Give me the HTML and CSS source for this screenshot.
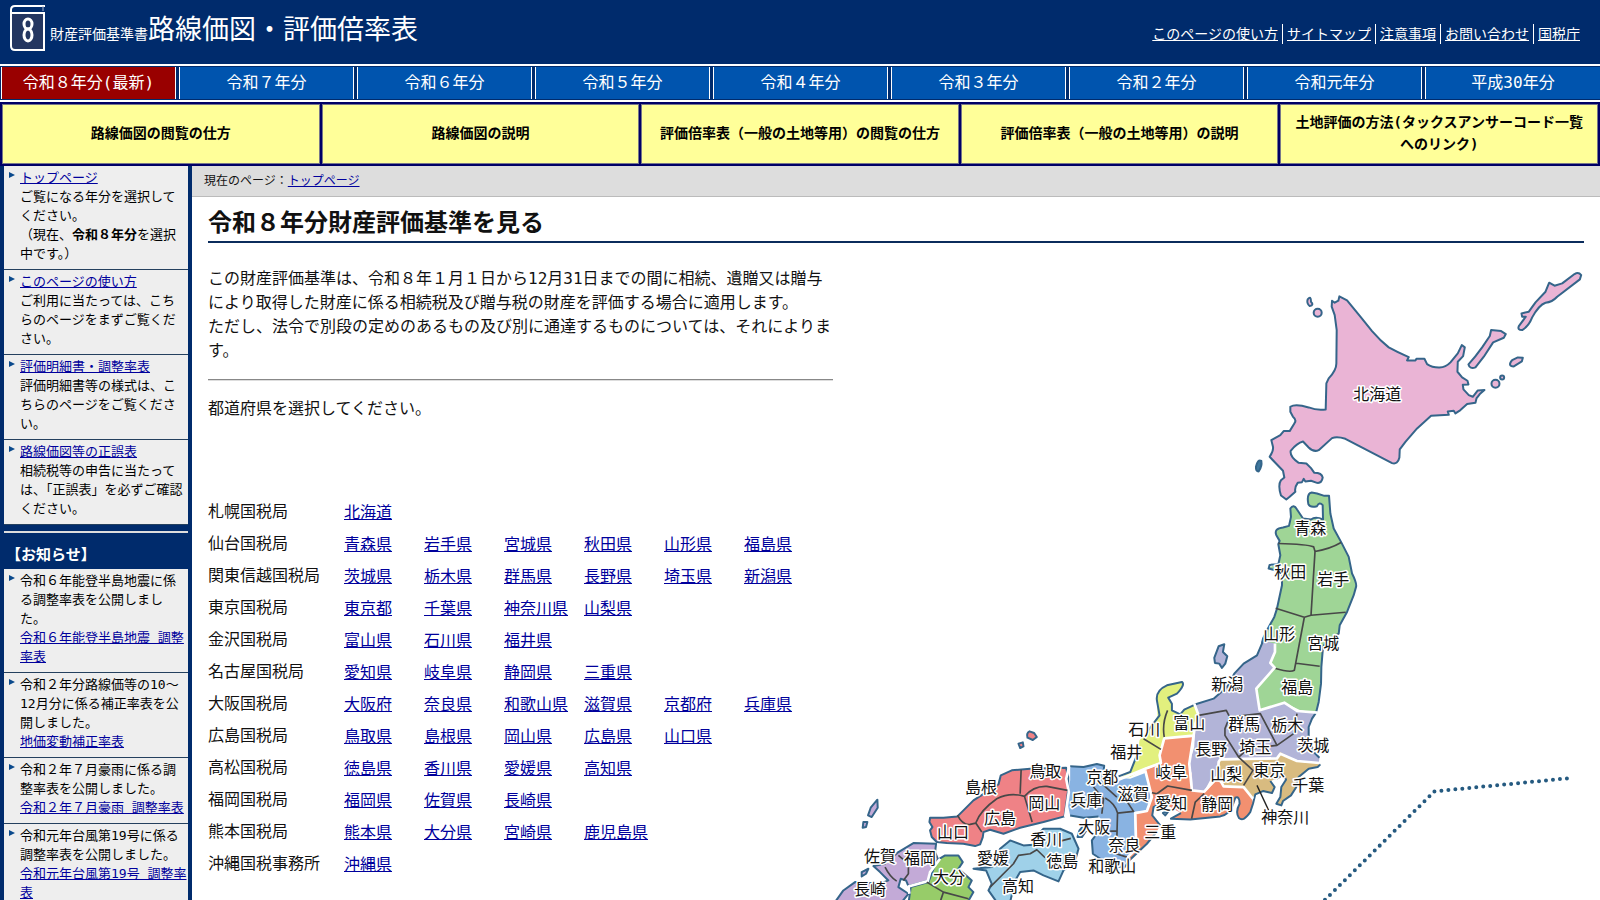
FILE: index.html
```html
<!DOCTYPE html>
<html lang="ja">
<head>
<meta charset="utf-8">
<title>財産評価基準書 路線価図・評価倍率表</title>
<link rel="stylesheet" href="styles.css">
</head>
<body>
<header class="site-header">
  <div class="brand">
    <svg class="book" viewBox="0 0 36 46" aria-hidden="true">
      <rect x="2" y="9" width="31" height="35" fill="#243660"/>
      <path d="M34 2V1H5Q1 1 1 5V41Q1 45 5 45H34V8H2" fill="none" stroke="#fff" stroke-width="2"/>
      <path d="M33 1V6" fill="none" stroke="#aab4cc" stroke-width="1"/>
      <ellipse cx="18" cy="19" rx="4" ry="5" fill="none" stroke="#fff" stroke-width="3"/>
      <ellipse cx="18" cy="30" rx="4" ry="6" fill="none" stroke="#fff" stroke-width="3"/>
    </svg>
    <span class="brand-small">財産評価基準書</span><span class="brand-large">路線価図・評価倍率表</span>
  </div>
  <nav class="utility">
    <a href="#">このページの使い方</a>
    <a href="#">サイトマップ</a>
    <a href="#">注意事項</a>
    <a href="#">お問い合わせ</a>
    <a href="#">国税庁</a>
  </nav>
</header>
<nav class="years">
  <a class="current" href="#">令和８年分(最新)</a>
  <a href="#">令和７年分</a>
  <a href="#">令和６年分</a>
  <a href="#">令和５年分</a>
  <a href="#">令和４年分</a>
  <a href="#">令和３年分</a>
  <a href="#">令和２年分</a>
  <a href="#">令和元年分</a>
  <a href="#">平成30年分</a>
</nav>
<nav class="guides">
  <a href="#">路線価図の閲覧の仕方</a>
  <a href="#">路線価図の説明</a>
  <a href="#">評価倍率表（一般の土地等用）の閲覧の仕方</a>
  <a href="#">評価倍率表（一般の土地等用）の説明</a>
  <a href="#">土地評価の方法(タックスアンサーコード一覧へのリンク)</a>
</nav>
<div class="page">
  <aside class="sidebar">
    <ul class="side-list">
      <li><a href="#">トップページ</a><br>ご覧になる年分を選択してください。<br>（現在、<strong>令和８年分</strong>を選択中です。）</li>
      <li><a href="#">このページの使い方</a><br>ご利用に当たっては、こちらのページをまずご覧ください。</li>
      <li><a href="#">評価明細書・調整率表</a><br>評価明細書等の様式は、こちらのページをご覧ください。</li>
      <li><a href="#">路線価図等の正誤表</a><br>相続税等の申告に当たっては、「正誤表」を必ずご確認ください。</li>
    </ul>
    <h2 class="side-title">【お知らせ】</h2>
    <ul class="side-list">
      <li>令和６年能登半島地震に係る調整率表を公開しました。<br><a href="#">令和６年能登半島地震 調整率表</a></li>
      <li>令和２年分路線価等の10～12月分に係る補正率表を公開しました。<br><a href="#">地価変動補正率表</a></li>
      <li>令和２年７月豪雨に係る調整率表を公開しました。<br><a href="#">令和２年７月豪雨 調整率表</a></li>
      <li>令和元年台風第19号に係る調整率表を公開しました。<br><a href="#">令和元年台風第19号 調整率表</a></li>
    </ul>
  </aside>
  <main class="main">
    <p class="crumbs">現在のページ：<a href="#">トップページ</a></p>
    <div class="content">
      <h1>令和８年分財産評価基準を見る</h1>
      <div class="columns">
        <section class="text">
          <p>この財産評価基準は、令和８年１月１日から12月31日までの間に相続、遺贈又は贈与により取得した財産に係る相続税及び贈与税の財産を評価する場合に適用します。<br>ただし、法令で別段の定めのあるもの及び別に通達するものについては、それによります。</p>
          <hr>
          <p>都道府県を選択してください。</p>
          <table class="prefs">
            <tr><th scope="row">札幌国税局</th><td><a href="#">北海道</a></td></tr>
            <tr><th scope="row">仙台国税局</th><td><a href="#">青森県</a></td><td><a href="#">岩手県</a></td><td><a href="#">宮城県</a></td><td><a href="#">秋田県</a></td><td><a href="#">山形県</a></td><td><a href="#">福島県</a></td></tr>
            <tr><th scope="row">関東信越国税局</th><td><a href="#">茨城県</a></td><td><a href="#">栃木県</a></td><td><a href="#">群馬県</a></td><td><a href="#">長野県</a></td><td><a href="#">埼玉県</a></td><td><a href="#">新潟県</a></td></tr>
            <tr><th scope="row">東京国税局</th><td><a href="#">東京都</a></td><td><a href="#">千葉県</a></td><td><a href="#">神奈川県</a></td><td><a href="#">山梨県</a></td></tr>
            <tr><th scope="row">金沢国税局</th><td><a href="#">富山県</a></td><td><a href="#">石川県</a></td><td><a href="#">福井県</a></td></tr>
            <tr><th scope="row">名古屋国税局</th><td><a href="#">愛知県</a></td><td><a href="#">岐阜県</a></td><td><a href="#">静岡県</a></td><td><a href="#">三重県</a></td></tr>
            <tr><th scope="row">大阪国税局</th><td><a href="#">大阪府</a></td><td><a href="#">奈良県</a></td><td><a href="#">和歌山県</a></td><td><a href="#">滋賀県</a></td><td><a href="#">京都府</a></td><td><a href="#">兵庫県</a></td></tr>
            <tr><th scope="row">広島国税局</th><td><a href="#">鳥取県</a></td><td><a href="#">島根県</a></td><td><a href="#">岡山県</a></td><td><a href="#">広島県</a></td><td><a href="#">山口県</a></td></tr>
            <tr><th scope="row">高松国税局</th><td><a href="#">徳島県</a></td><td><a href="#">香川県</a></td><td><a href="#">愛媛県</a></td><td><a href="#">高知県</a></td></tr>
            <tr><th scope="row">福岡国税局</th><td><a href="#">福岡県</a></td><td><a href="#">佐賀県</a></td><td><a href="#">長崎県</a></td></tr>
            <tr><th scope="row">熊本国税局</th><td><a href="#">熊本県</a></td><td><a href="#">大分県</a></td><td><a href="#">宮崎県</a></td><td><a href="#">鹿児島県</a></td></tr>
            <tr><th scope="row">沖縄国税事務所</th><td><a href="#">沖縄県</a></td></tr>
          </table>
        </section>
        <svg class="map" viewBox="833 256 750 660" role="img" aria-label="日本地図">
          <!-- Hokkaido and the northern islands -->
          <g class="coast hokkaido" transform="translate(1220 260) scale(.33333)">
            <path d="M335 122L343 128L354 122L357 109L380 121L420 170L455 213Q480 242 505 262Q530 276 565 291L560 301L585 301L588 296L612 296L620 312Q635 322 655 322Q675 323 690 307L712 280L724 255L733 262L728 288L712 305L711 335L725 352L741 362L744 373L727 374L729 388L745 405L757 410L772 391L792 390L778 402L768 415L765 428L740 432L720 450L705 460L700 452L682 454L685 464L632 467L590 505L555 545L538 568L537 592Q532 614 515 609L440 570L375 536Q350 528 335 534L295 570Q280 577 265 562L248 544Q230 548 211 572Q208 590 235 608L258 610L272 624L282 638Q304 638 307 652Q304 670 290 668L272 662L255 664L250 656L245 666L232 668Q222 682 225 695L208 710L198 718L182 706Q172 675 182 660L192 652L188 632L165 608L148 590Q160 572 158 560L153 540L180 525L190 513L208 513L222 490Q230 480 218 470L210 455L210 440Q225 430 265 442Q290 452 316 448L318 370L325 355Q348 330 348 310L349 210L343 165L334 140Z"/>
            <path d="M1082 45Q1074 35 1062 42L1025 70L1002 77L986 68L975 95L945 127L925 155L903 160L905 170L916 170L895 198Q890 210 905 210Q925 198 935 172Q955 135 975 128Q995 126 1010 110L1078 58Z"/>
            <path d="M812 210L842 213L856 222L850 233L818 247L790 290L765 322Q748 328 744 313Q765 290 785 262L808 228Z"/>
            <path d="M875 300L892 292L907 293L904 304L880 319Q860 318 875 300Z"/>
            <path d="M262 118Q272 105 272 125Q282 135 268 138Q258 130 262 118Z"/>
            <path d="M107 620Q112 596 123 602Q126 618 115 634Q106 634 107 620Z" fill="#3f789e"/>
            <circle cx="292" cy="158" r="12"/><circle cx="825" cy="371" r="12"/><circle cx="845" cy="352" r="6"/>
          </g>
          <!-- Tohoku -->
          <g transform="translate(1100 480) scale(.33333)">
            <path class="tohoku" d="M534 192L538 182L528 165Q520 145 548 142L566 137L572 110L570 85Q580 70 590 88L608 115L632 118Q645 108 668 118L667 75Q657 64 650 78Q630 84 624 72Q618 40 634 37L650 40L672 47H686L690 100L700 145L722 185L745 230L755 280Q770 310 767 320L760 345L740 395L718 435L715 460L680 480L668 500L663 560L662 610L655 665L647 697L600 690L552 667L478 690L468 625L480 600L523 562L510 550L522 515V492L485 492L488 475L500 450L522 410L530 385L545 315V275L505 262L534 252L540 225Z"/>
            <path class="shore" d="M485 492L488 475L500 450L522 410L530 385L545 315V275L505 265L508 254L534 252L540 225L534 192L538 182L528 165Q520 145 548 142L566 137L572 110L570 85Q580 70 590 88L608 115L632 118Q645 108 668 118L667 75Q657 64 650 78Q630 84 624 72Q618 40 634 37L650 40L672 47H686L690 100L700 145L722 185L745 230L755 280Q770 310 767 320L760 345L740 395L718 435L715 460L680 480L668 500L663 560L662 610L655 665L647 697"/>
            <path class="border" d="M534 190Q620 192 640 200L644 214L632 405L736 396M644 214Q690 206 722 187M526 384L612 411L632 405M612 411L582 570Q570 578 523 564M588 549L658 558"/>
          </g>
          <!-- Kanto, Chubu and Kinki -->
          <g transform="translate(1080 640) scale(.33333)">
            <path class="shinetsu" d="M548 0L545 10L530 45L490 70L462 100L440 140L400 175L346 192L355 225L345 250L342 320L325 375L335 400L337 450L372 452L392 415L412 405L415 365L420 356L590 354L600 345L650 362L715 368L718 350L700 335L685 290L685 260L695 235L707 217L650 210L612 187L538 210L528 145L583 82L570 70L582 35V10Z"/>
            <path class="tokyo" d="M600 335L640 360L720 370L712 380L685 385L655 410L648 440L632 465L608 482L603 495L588 490L600 470L603 440L617 418L610 402L590 415L570 422L583 440L575 458L548 452L525 462L515 472L490 440L430 435L412 405L418 360L592 357Z"/>
            <path class="nagoya" d="M252 294L340 290L333 350L327 370L333 400L337 450L375 454L408 420L440 440L490 440L515 475L518 490L510 515Q490 545 476 533Q464 515 478 490Q478 466 465 472L455 500Q450 520 420 528L330 537L272 535L302 518L262 495L240 490L220 500L216 525L240 555L225 580L200 610L150 657L140 650L168 625V518L200 513L215 470L195 388L245 370L240 340Z"/>
            <path class="kanazawa" d="M115 416L150 395L170 345L178 300L232 230L230 180Q226 150 260 135L305 125Q316 132 290 160L264 172L275 190V210L300 222L312 208L346 193L355 225L340 286L250 292L238 345L242 365L195 382L150 410Z"/>
            <path class="osaka" d="M-30 378L10 380L50 371L72 376L70 395L105 412L150 415L195 398L210 440V470L200 510L162 515L165 625L140 655L132 680L105 675L60 655L38 640L35 600L50 580L60 560L75 550L55 528L10 532L-30 525L-40 480L-30 420Z"/>
            <path class="shinetsu shore" d="M402 53L415 18L432 12L428 35L441 48L435 70L425 83L417 70L404 68Z"/>
            <path class="shore" d="M548 0L545 10L530 45L490 70L462 100L440 140L400 175L346 192L312 208L300 222L275 210V190L264 172L290 160Q316 132 305 125L260 135Q226 150 230 180L238 225L200 275M175 325L170 345L150 395L115 408M707 217L695 235L685 260L685 290L700 335L717 352M720 372L712 380L685 385L655 410L648 440L632 465L608 482L603 495L588 490L600 470L603 440L617 418L610 402L590 415M570 422L583 440L575 458L548 452L525 462L518 490L510 515Q490 545 476 533Q464 515 478 490Q478 466 465 472L455 500Q450 520 420 528L330 537L272 535L302 518M240 490L220 500L216 525L240 555M225 580L200 610L150 657L132 682L105 675L60 655L38 640L35 600L50 580M-30 378L10 380L50 371L72 376L70 395M55 528L10 532L-30 525"/>
            <path class="shore" d="M248 518L265 512L255 525Z"/>
            <path class="divide" d="M584 10V35L570 68L583 82L528 145L538 210L612 187L650 212L712 217M342 190L355 225L345 250L340 286L252 294L238 345L242 368L195 385L115 418M340 286L327 370L335 450L372 454L412 410L415 365L420 357L590 354L600 340L650 362L718 368M412 405L430 438L490 440L518 475M195 390L215 470L200 512L165 518L168 625L138 655"/>
            <path class="border" d="M355 225L438 210L448 230L434 265V285L475 350L518 390L490 435M448 230L540 220L590 315L640 280L650 220M475 350L498 330M590 315L490 325M262 210Q245 250 252 290M190 295L242 327M215 457L230 460L262 437L335 450M372 460L345 485L334 535M65 430L110 470M40 440L70 475L65 520M75 473Q105 490 112 518L160 513L125 460M112 518L110 590M90 572H110M108 640L140 650"/>
            <path class="leader" d="M530 435L565 510"/>
          </g>
          <!-- Chugoku, Shikoku and northern Kyushu -->
          <g transform="translate(830 720) scale(.33333)">
            <g class="coast">
              <path class="hiroshima" d="M300 292L340 292L382 288L430 240L505 192L512 165L545 150L600 145L708 142L714 170V210L703 288L640 305L570 322L520 340L480 328L460 335L458 350L450 372L435 377L400 370L350 368L320 365L305 350L300 330L307 320L298 305Z"/>
              <path class="hiroshima" d="M598 33L612 38L620 50L608 59L592 52Q588 38 598 33ZM565 70L578 66L580 78L570 83Z"/>
              <path class="takamatsu" d="M430 445L485 440L510 385L540 360L580 375L620 372L605 360L640 325L690 325L725 340L745 385L735 420L700 450L685 483L640 465L610 450L570 455L555 480L540 545H500L475 510L485 490L468 450Z"/>
              <path class="fukuoka" d="M130 437L165 430L205 395L250 368L318 370L315 395L325 420L300 455L295 480L235 497L228 480L212 475L205 500L235 520L215 545H15L40 510L75 485L150 490L175 480L150 455Z"/>
              <path class="kumamoto" d="M320 420L345 405H385L398 425L385 445L425 480L415 500L430 515L410 550H235L242 500L295 485Z"/>
              <path class="fukuoka" d="M142 238L143 262L125 290L114 285L122 262ZM100 305L112 305L108 320L98 322ZM95 455L115 445L108 460L95 468Z"/>
              <path class="osaka" d="M748 330L765 310L772 325L755 350L742 350Z"/>
            </g>
            <path class="divide" d="M717 138L708 175L716 215L705 290M330 415L300 455L293 482L235 498L238 520"/>
            <path class="border" d="M573 148L570 220M382 284Q398 315 420 312L437 308Q450 270 500 235Q540 215 583 228Q610 196 650 198L712 210M583 228L606 305M437 308L455 335M690 362L722 354M480 500L550 430L565 405L600 400L620 388L645 412M205 405L235 430V460L220 480M165 440Q180 470 200 482M290 485L340 515L415 535M340 515L330 545"/>
          </g>
          <path class="dots" d="M1434 791L1320 904M1434 791L1567 778"/>
          <g class="labels">
            <text x="1353" y="400">北海道</text><text x="1294" y="534">青森</text><text x="1274" y="578">秋田</text><text x="1317" y="585">岩手</text><text x="1263" y="640">山形</text><text x="1307" y="649">宮城</text><text x="1281" y="693">福島</text><text x="1211" y="690">新潟</text>
            <text x="1128" y="735">石川</text><text x="1173" y="729">富山</text><text x="1228" y="730">群馬</text><text x="1271" y="731">栃木</text><text x="1297" y="751">茨城</text><text x="1110" y="758">福井</text><text x="1195" y="755">長野</text><text x="1239" y="753">埼玉</text>
            <text x="1155" y="778">岐阜</text><text x="1210" y="780">山梨</text><text x="1253" y="776">東京</text><text x="1292" y="791">千葉</text><text x="1086" y="783">京都</text><text x="1117" y="800">滋賀</text><text x="1155" y="809">愛知</text><text x="1201" y="810">静岡</text>
            <text x="1261" y="823">神奈川</text><text x="1144" y="838">三重</text><text x="1078" y="833">大阪</text><text x="1108" y="851">奈良</text><text x="1088" y="872">和歌山</text><text x="1070" y="806">兵庫</text><text x="1029" y="777">鳥取</text><text x="965" y="793">島根</text>
            <text x="1028" y="809">岡山</text><text x="984" y="824">広島</text><text x="937" y="838">山口</text><text x="864" y="862">佐賀</text><text x="904" y="864">福岡</text><text x="977" y="864">愛媛</text><text x="1030" y="845">香川</text><text x="1046" y="867">徳島</text>
            <text x="933" y="883">大分</text><text x="1002" y="892">高知</text><text x="854" y="895">長崎</text>
          </g>
        </svg>
      </div>
    </div>
  </main>
</div>
</body>
</html>
```
FILE: styles.css
```css
* { box-sizing: border-box; }

body {
  margin: 0;
  background: #002b6c;
  color: #111;
  font: 16px/24px "DejaVu Sans Mono", "Noto Sans CJK JP", monospace;
}

a { color: #00009c; }
p, ul, h1, h2 { margin: 0; padding: 0; }
ul { list-style: none; }

.site-header {
  display: flex;
  justify-content: space-between;
  height: 64px;
  padding: 5px 20px 0 10px;
  color: #fff;
}
.brand { display: flex; align-items: baseline; }
.book { width: 36px; height: 46px; align-self: flex-start; margin-right: 4px; }
.brand-small { font-size: 14px; }
.brand-large { font-size: 27px; line-height: 50px; }
.utility { display: flex; align-items: center; padding-bottom: 2px; }
.utility a {
  padding: 0 4px;
  border-left: 1px solid #fff;
  color: #fff;
  font-size: 14px;
  line-height: 20px;
}
.utility a:first-child { border-left: 0; }
.utility a:last-child { padding-right: 0; }

.years {
  display: grid;
  grid-template-columns: repeat(9, 1fr);
  gap: 3px;
  padding: 1px 0 1px 1px;
  border-top: 2px solid #fff;
  border-bottom: 2px solid #fff;
}
.years a {
  border: 1px solid #fff;
  border-width: 0 1px;
  background: #0054ae;
  color: #fff;
  line-height: 32px;
  text-align: center;
  text-decoration: none;
}
.years a:last-child { border-right: 0; }
.years .current { background: #990000; }

.guides {
  display: grid;
  grid-template-columns: repeat(5, 1fr);
  gap: 2px;
  padding: 2px;
  background: #000066;
}
.guides a {
  display: flex;
  align-items: center;
  justify-content: center;
  min-height: 60px;
  padding: 0 10px 2px;
  border: 1px solid #77778a;
  background: #ffff99;
  color: #000;
  font-size: 14px;
  font-weight: bold;
  line-height: 22px;
  text-align: center;
  text-decoration: none;
}

.page { display: grid; grid-template-columns: 192px 1fr; }
.sidebar { padding: 0 4px; background: #002b6c; color: #000; font-size: 13px; line-height: 19px; }
.side-list li {
  position: relative;
  padding: 2px 0 6px 16px;
  border-bottom: 1px solid #24405e;
  background: #eee;
}
.side-list li::before {
  content: "";
  position: absolute;
  left: 5px;
  top: 6px;
  border: 3px solid transparent;
  border-left: 6px solid #0b4a8c;
  border-right: 0;
}
.side-title {
  margin-top: 6px;
  padding: 12px 0 4px 2px;
  border-top: 2px solid #ddd;
  color: #fff;
  font-size: 15px;
  line-height: 20px;
}

.main { background: #fff; }
.crumbs {
  padding: 3px 12px;
  border-bottom: 1px solid #bbb;
  background: #ddd;
  font-size: 12px;
  line-height: 24px;
}
.content { padding: 0 16px; }
h1 {
  padding: 10px 0 2px;
  border-bottom: 2px solid #0b2c5c;
  font-size: 24px;
  line-height: 32px;
}
.columns {
  display: grid;
  grid-template-columns: 5fr 6fr;
  align-items: start;
  padding-top: 13px;
}
.text { padding-top: 11px; }
hr { margin: 16px 0; border: 0; border-top: 1px solid #888; border-bottom: 1px solid #ddd; }
.prefs { margin-top: 75px; border-collapse: collapse; }
.prefs th { width: 136px; padding: 0; font-weight: normal; text-align: left; }
.prefs td { width: 80px; padding: 2px 0 0; white-space: nowrap; }
.prefs tr { height: 32px; }

.map { width: 100%; }
.coast path, .coast circle { stroke: #35658a; stroke-width: 6; stroke-linejoin: round; }
.hokkaido { fill: #eab4d5; }
.tohoku { fill: #9fd596; }
.shinetsu { fill: #b2b4d8; }
.tokyo { fill: #d8bb80; }
.nagoya { fill: #f29070; }
.kanazawa { fill: #e2f07e; }
.osaka { fill: #89b3e2; }
.hiroshima { fill: #ef8286; }
.takamatsu { fill: #9fd1e9; }
.fukuoka { fill: #c3aad7; }
.kumamoto { fill: #97cc69; }
.shore { stroke: #35658a; stroke-width: 6; stroke-linejoin: round; }
.shore:not(.shinetsu) { fill: none; }
.divide { fill: none; stroke: #fff; stroke-width: 8; stroke-linejoin: round; }
.border { fill: none; stroke: #484848; stroke-width: 5; stroke-linejoin: round; }
.leader { fill: none; stroke: #222; stroke-width: 4; }
.dots { fill: none; stroke: #255a80; stroke-width: 4; stroke-linecap: round; stroke-dasharray: 0 7; }
.labels {
  fill: #111;
  stroke: #fff;
  stroke-width: 3px;
  stroke-linejoin: round;
  paint-order: stroke;
  font-family: "Noto Sans CJK JP", sans-serif;
  font-size: 16px;
}
```
